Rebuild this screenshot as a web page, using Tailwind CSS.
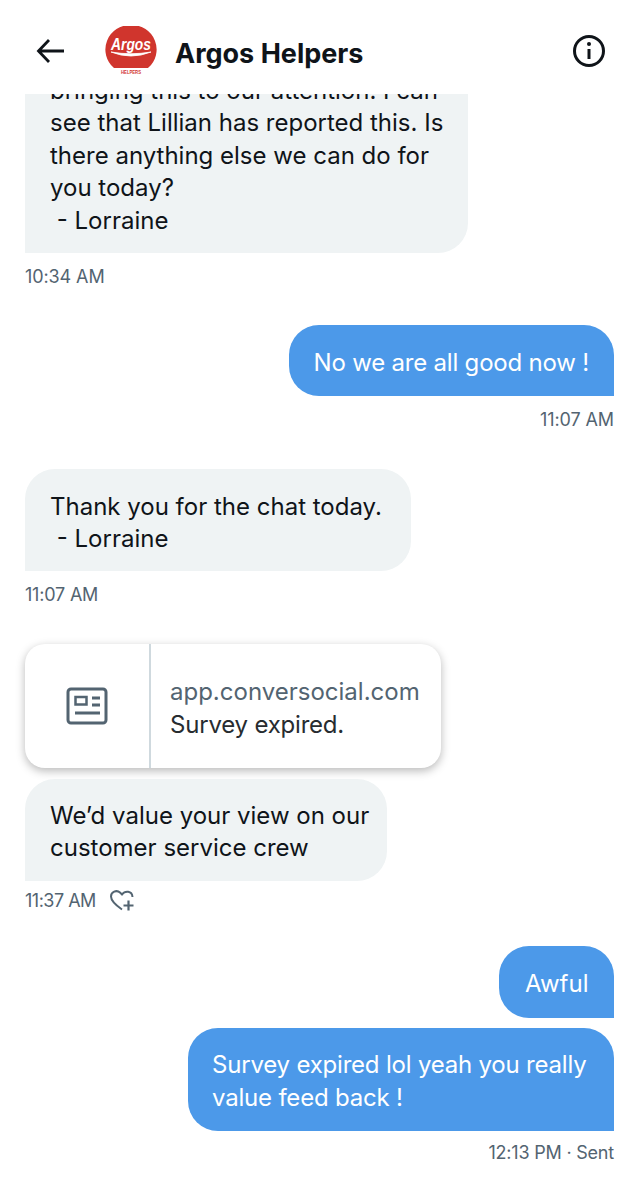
<!DOCTYPE html>
<html lang="en">
<head>
    <meta charset="UTF-8">
    <meta name="viewport" content="width=device-width, initial-scale=1.0">
    <title>Argos Helpers</title>
    <script src="https://cdn.jsdelivr.net/npm/@tailwindcss/browser@4"></script>
</head>
<body class="bg-white h-[1200px] overflow-hidden font-['Inter',sans-serif] text-[#0f1419]">
    <header class="h-[94px] pt-[8px] flex items-center relative z-10 bg-white">
        <svg class="ml-[36px] w-[29px] h-[26px]" viewBox="0 0 29 26" fill="none" stroke="#0f1419" stroke-width="2.8">
            <path d="M28 13H3M13 2L2.5 13L13 24"/>
        </svg>
        <svg class="ml-[40px] w-[52px] h-[50px]" viewBox="0 0 52 50">
            <path d="M26 -1a25 24.500 0 0 1 17 43H9A25 24.500 0 0 1 26 -1z" fill="#d0352d"/>
            <text x="26" y="24" text-anchor="middle" fill="#fff" font-size="16.500" font-weight="700" font-style="italic" font-family="Liberation Sans" textLength="40" lengthAdjust="spacingAndGlyphs">Argos</text>
            <path d="M6 26q20 8 40 0q-20 3.500-40 0z" fill="#fff" stroke="#fff" stroke-width="0.800"/>
            <text x="26" y="47.500" text-anchor="middle" fill="#d0352d" font-size="5.500" font-weight="700" font-family="Liberation Sans" textLength="20" lengthAdjust="spacingAndGlyphs">HELPERS</text>
        </svg>
        <h1 class="ml-[18px] mt-[6px] text-[27px] font-bold">Argos Helpers</h1>
        <svg class="ml-auto mr-[33px] w-[34px] h-[34px]" viewBox="0 0 34 34" fill="none" stroke="#0f1419">
            <circle cx="17" cy="17" r="14.500" stroke-width="3"/>
            <path d="M17 15v10" stroke-width="3"/>
            <circle cx="17" cy="10" r="2" fill="#0f1419" stroke="none"/>
        </svg>
    </header>

    <main class="h-[1106px] overflow-hidden px-[25px] text-[24px] leading-[32.6px]">
        <div class="-mt-[38px]">
            <div class="w-[443px] bg-[#eff3f4] rounded-[30px] rounded-bl-none px-[25px] pt-[18.5px] pb-[15.5px] whitespace-nowrap">
                bringing this to our attention. I can<br>see that Lillian has reported this. Is<br>there anything else we can do for<br>you today?<br>&nbsp;- Lorraine
            </div>
            <p class="mt-[13px] text-[18px] tracking-[-0.1px] leading-[22px] text-[#536471]">10:34 AM</p>

            <div class="mt-[37px] flex justify-end">
                <div class="bg-[#4c99e9] text-white tracking-[-0.2px] rounded-[30px] rounded-br-none px-[25px] pt-[22px] pb-[16px]">No we are all good now !</div>
            </div>
            <p class="mt-[13px] text-right text-[18px] tracking-[-0.1px] leading-[22px] text-[#536471]">11:07 AM</p>

            <div class="mt-[38px] w-[386px] bg-[#eff3f4] rounded-[30px] rounded-bl-none px-[25px] pt-[22px] pb-[15px] whitespace-nowrap">
                Thank you for the chat today.<br>&nbsp;- Lorraine
            </div>
            <p class="mt-[13px] text-[18px] tracking-[-0.2px] leading-[22px] text-[#536471]">11:07 AM</p>

            <div class="mt-[38px] w-[416px] h-[124px] flex bg-white rounded-[20px] shadow-[0_3px_10px_rgba(0,0,0,0.28)]">
                <div class="w-[126px] flex items-center justify-center border-r-2 border-[#cfd9de]">
                    <svg class="w-[42px] h-[38px]" viewBox="0 0 42 38" fill="none" stroke="#536471" stroke-width="3">
                        <rect x="2" y="2" width="38" height="34" rx="3"/>
                        <rect x="9.500" y="10" width="11" height="7.500" stroke-width="2.500"/>
                        <path d="M26 11h8M26 18h8M9 26h25"/>
                    </svg>
                </div>
                <div class="flex-1 pl-[19px] pt-[31px] leading-[33px]">
                    <p class="text-[#536471]">app.conversocial.com</p>
                    <p class="text-[#272c30] tracking-[-0.2px]">Survey expired.</p>
                </div>
            </div>

            <div class="mt-[11px] w-[362px] bg-[#eff3f4] rounded-[30px] rounded-bl-none px-[25px] pt-[21px] pb-[16px] whitespace-nowrap">
                We’d value your view on our<br>customer service crew
            </div>
            <div class="mt-[8px] flex items-center text-[18px] leading-[22px] text-[#536471]">
                <span class="tracking-[-0.5px]">11:37 AM</span>
                <svg class="ml-[13px] w-[26px] h-[24px]" viewBox="0 0 26 24" fill="none" stroke="#536471" stroke-width="2">
                    <path d="M13 20.500C8 17 2 12.500 2 7.500C2 3 7.500 0.500 11 3.500L13 5.500C16 1.500 23 1.500 23.500 8"/>
                    <path d="M19.500 11.500v10M14.500 16.500h10" stroke-width="2.200"/>
                </svg>
            </div>

            <div class="mt-[33px] flex justify-end">
                <div class="w-[115px] bg-[#4c99e9] text-white rounded-[30px] rounded-br-none pl-[26px] pt-[22px] pb-[17.4px]">Awful</div>
            </div>
            <div class="mt-[10px] flex justify-end">
                <div class="w-[426px] bg-[#4c99e9] text-white tracking-[-0.2px] rounded-[30px] rounded-br-none px-[24px] pt-[21px] pb-[17px] whitespace-nowrap">
                    Survey expired lol yeah you really<br>value feed back !
                </div>
            </div>
            <p class="mt-[11px] text-right text-[18px] tracking-[-0.2px] leading-[22px] text-[#536471]">12:13 PM · Sent</p>
        </div>
    </main>
</body>
</html>
